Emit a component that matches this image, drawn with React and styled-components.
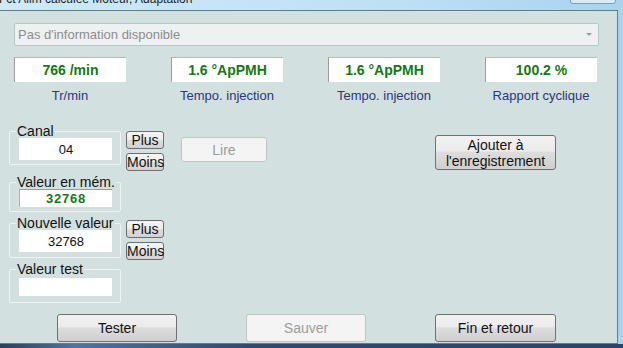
import React from "react";
import styled, { createGlobalStyle } from "styled-components";

const Global = createGlobalStyle`
  html, body {
    margin: 0;
    padding: 0;
    background: #b9dcf1;
    font-family: "Liberation Sans", Arial, sans-serif;
  }
`;

const readouts = [
  { value: "766 /min", label: "Tr/min" },
  { value: "1.6 \u00b0ApPMH", label: "Tempo. injection" },
  { value: "1.6 \u00b0ApPMH", label: "Tempo. injection" },
  { value: "100.2 %", label: "Rapport cyclique" },
];

const App = () => {
  return (
    <>
      <Global />
      <StyledWindow>
        <StyledTitleBar>
          <span>Fct Alim calculée Moteur, Adaptation</span>
          <StyledCaptionButton />
        </StyledTitleBar>
        <StyledClient>
          <StyledSelect>
            <span>Pas d'information disponible</span>
            <StyledArrow />
          </StyledSelect>

          <StyledReadouts>
            {readouts.map((r, i) => (
              <StyledReadout key={i}>
                <div className="box">{r.value}</div>
                <div className="label">{r.label}</div>
              </StyledReadout>
            ))}
          </StyledReadouts>

          <StyledMain>
            <StyledLeft>
              <StyledRow>
                <StyledGroup $pad={4}>
                  <legend>Canal</legend>
                  <StyledField $h={22}>04</StyledField>
                </StyledGroup>
                <StyledStack $top={7}>
                  <StyledSmallButton>Plus</StyledSmallButton>
                  <StyledSmallButton>Moins</StyledSmallButton>
                </StyledStack>
              </StyledRow>
              <StyledRow $top={4}>
                <StyledGroup $pad={4}>
                  <legend>Valeur en mém.</legend>
                  <StyledField $h={18} $memory>
                    32768
                  </StyledField>
                </StyledGroup>
              </StyledRow>
              <StyledRow $top={4}>
                <StyledGroup $pad={5}>
                  <legend>Nouvelle valeur</legend>
                  <StyledField $h={22}>32768</StyledField>
                </StyledGroup>
                <StyledStack $top={4}>
                  <StyledSmallButton>Plus</StyledSmallButton>
                  <StyledSmallButton>Moins</StyledSmallButton>
                </StyledStack>
              </StyledRow>
              <StyledRow $top={2}>
                <StyledGroup $pad={6} $gap={2}>
                  <legend>Valeur test</legend>
                  <StyledField $h={18} />
                </StyledGroup>
              </StyledRow>
            </StyledLeft>

            <StyledButton disabled $w={86} $h={25} $left={17} $top={13}>
              Lire
            </StyledButton>
            <StyledButton $w={121} $h={35} $left={168} $top={11} $two>
              Ajouter à
              <br />
              l'enregistrement
            </StyledButton>
          </StyledMain>

          <StyledFooter>
            <StyledButton $w={120} $h={28}>
              Tester
            </StyledButton>
            <StyledButton disabled $w={120} $h={28}>
              Sauver
            </StyledButton>
            <StyledButton $w={121} $h={28}>
              Fin et retour
            </StyledButton>
          </StyledFooter>
        </StyledClient>
        <StyledTaskbar />
      </StyledWindow>
    </>
  );
};

const StyledWindow = styled.div`
  width: 623px;
  height: 348px;
  display: flex;
  flex-direction: column;
  overflow: hidden;
  background: linear-gradient(90deg, #cfe9f8 0%, #bfe1f5 60%, #a9d3ee 100%);
`;

const StyledTitleBar = styled.div`
  position: relative;
  height: 10px;
  flex: none;
  overflow: hidden;
  color: #1b1b1b;
  span {
    display: block;
    margin-top: -8px;
    margin-left: -1px;
    font-size: 12px;
    line-height: 14px;
    white-space: nowrap;
  }
`;

const StyledCaptionButton = styled.div`
  position: absolute;
  right: 7px;
  top: -10px;
  width: 44px;
  height: 12px;
  border: 1px solid #7e9fb4;
  border-radius: 3px;
  background: #d7ecf8;
`;

const StyledClient = styled.div`
  flex: none;
  height: 332px;
  margin-right: 5px;
  border: 1px solid #5f7f86;
  border-left: none;
  background: #d3e0e0;
  display: flex;
  flex-direction: column;
  font-size: 12px;
`;

const StyledSelect = styled.div`
  margin: 12px 18px 0 14px;
  height: 21px;
  border: 1px solid #b9c6c6;
  border-radius: 2px;
  background: #eef1f1;
  color: #8c8c8c;
  display: flex;
  align-items: center;
  justify-content: space-between;
  padding: 0 6px 0 3px;
  font-size: 13px;
`;

const StyledArrow = styled.div`
  width: 0;
  height: 0;
  border-left: 3px solid transparent;
  border-right: 3px solid transparent;
  border-top: 3px solid #9a9a9a;
`;

const StyledReadouts = styled.div`
  display: grid;
  grid-template-columns: repeat(4, 112px);
  column-gap: 45px;
  margin: 11px 0 0 14px;
`;

const StyledReadout = styled.div`
  display: flex;
  flex-direction: column;
  align-items: center;
  .box {
    width: 112px;
    height: 25px;
    box-sizing: border-box;
    background: #fff;
    border-top: 1px solid #b8b8b8;
    border-left: 1px solid #9c9c9c;
    color: #137a13;
    font-weight: bold;
    font-size: 14px;
    display: flex;
    align-items: center;
    justify-content: center;
  }
  .label {
    margin-top: 6px;
    color: #2a3778;
    font-size: 13px;
    line-height: 15px;
  }
`;

const StyledMain = styled.div`
  display: flex;
  align-items: flex-start;
  margin-top: 21px;
  padding-left: 9px;
`;

const StyledLeft = styled.div`
  display: flex;
  flex-direction: column;
`;

const StyledRow = styled.div`
  display: flex;
  align-items: flex-start;
  margin-top: ${(p) => p.$top || 0}px;
`;

const StyledGroup = styled.fieldset`
  width: 112px;
  box-sizing: border-box;
  margin: 0;
  padding: ${(p) => p.$gap || 0}px 0 ${(p) => p.$pad}px 9px;
  border: 1px solid #eef4f4;
  border-radius: 2px;
  legend {
    padding: 0 1px;
    margin-left: -3px;
    font-size: 14px;
    line-height: 14px;
    color: #111;
    white-space: nowrap;
  }
`;

const StyledField = styled.div`
  width: 93px;
  height: ${(p) => p.$h}px;
  box-sizing: border-box;
  background: #fff;
  border-top: 1px solid ${(p) => (p.$memory ? "#9c9c9c" : "#fff")};
  border-left: 1px solid ${(p) => (p.$memory ? "#b0b0b0" : "#fff")};
  display: flex;
  align-items: center;
  justify-content: center;
  font-size: 13px;
  color: ${(p) => (p.$memory ? "#157a15" : "#111")};
  font-weight: ${(p) => (p.$memory ? "bold" : "normal")};
  letter-spacing: ${(p) => (p.$memory ? "0.8px" : "0")};
`;

const StyledStack = styled.div`
  display: flex;
  flex-direction: column;
  gap: 4px;
  margin: ${(p) => p.$top}px 0 0 5px;
`;

const StyledSmallButton = styled.button`
  width: 38px;
  height: 18px;
  padding: 0;
  border: 1px solid #6d6d6d;
  border-radius: 3px;
  background: linear-gradient(#f4f4f4 0%, #ececec 50%, #dcdcdc 51%, #d2d2d2 100%);
  font-family: "Liberation Sans", Arial, sans-serif;
  font-size: 14px;
  line-height: 14px;
  color: #111;
`;

const StyledButton = styled.button`
  flex: none;
  width: ${(p) => p.$w}px;
  height: ${(p) => p.$h}px;
  margin: ${(p) => p.$top || 0}px 0 0 ${(p) => p.$left || 0}px;
  padding: 0;
  border: 1px solid #707070;
  border-radius: 3px;
  background: linear-gradient(#f2f2f2 0%, #ebebeb 45%, #dddddd 50%, #cfcfcf 100%);
  font-family: "Liberation Sans", Arial, sans-serif;
  font-size: 14px;
  line-height: ${(p) => (p.$two ? "16px" : "14px")};
  color: #111;
  &:disabled {
    background: #f4f4f4;
    border-color: #bfc5c5;
    color: #9c9c9c;
  }
`;

const StyledFooter = styled.div`
  margin-top: auto;
  margin-bottom: 1px;
  display: flex;
  gap: 69px;
  padding-left: 57px;
`;

const StyledTaskbar = styled.div`
  flex: 1;
  background: linear-gradient(90deg, #2b3f5e 0%, #4d74a3 12%, #2e4a74 40%, #2a456d 100%);
`;

export default App;
